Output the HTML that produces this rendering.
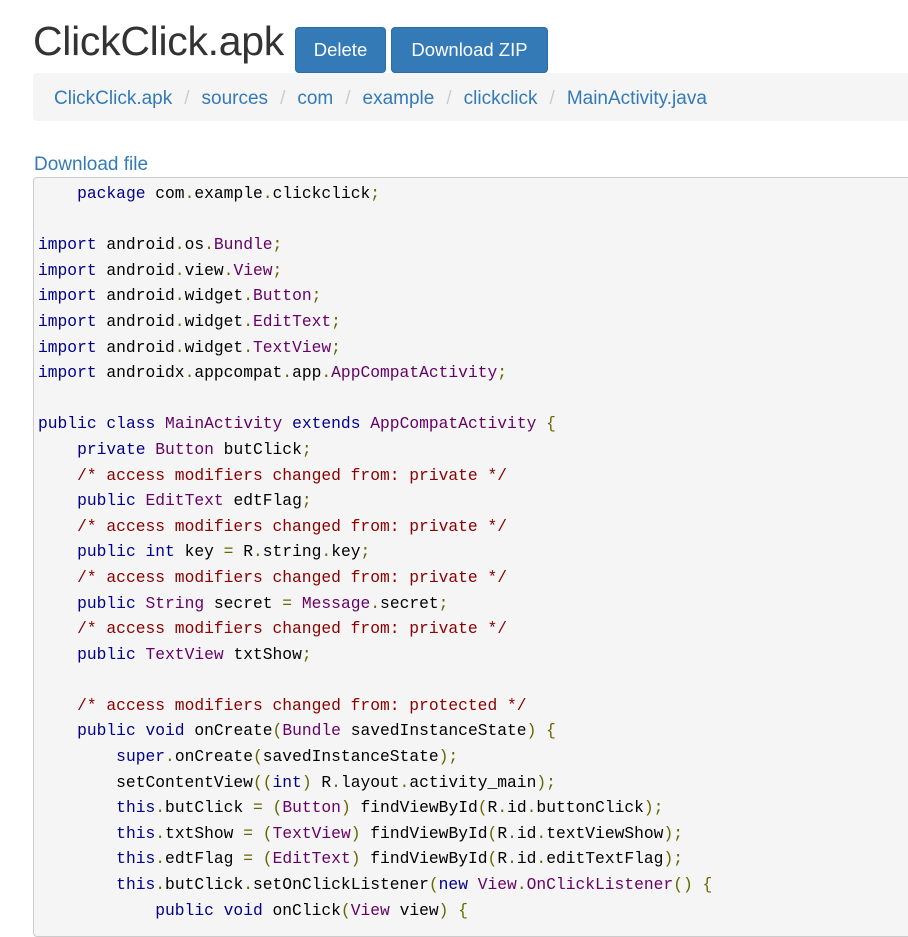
<!DOCTYPE html>
<html><head><meta charset="utf-8"><style>
body{margin:0;background:#fff;font-family:"Liberation Sans",Arial,sans-serif;width:908px;height:912px;overflow:hidden;position:relative}
h1{position:absolute;left:33px;top:16px;margin:0;font-size:41px;font-weight:normal;color:#333;line-height:50px;letter-spacing:-0.3px}
.btn{position:absolute;top:27px;height:46px;background:#337ab7;border:1px solid #2e6da4;border-radius:4px;color:#fff;font-size:18.5px;line-height:44px;text-align:center;box-sizing:border-box}
.bc{position:absolute;left:33px;top:73px;width:890px;height:48px;background:#f5f5f5;border-radius:4px;font-size:19px;line-height:52px;padding-left:21px;box-sizing:border-box;color:#337ab7;white-space:nowrap}
.bc s{text-decoration:none;color:#ccc;padding:0 12px}
.dl{position:absolute;left:34px;top:153px;font-size:19px;color:#337ab7;line-height:24px}
pre{position:absolute;left:33px;top:177px;width:900px;height:760px;margin:0;background:#f5f5f5;border:1px solid #ccc;border-radius:4px;padding:3px 4px;font-family:"Liberation Mono",monospace;font-size:16.3px;line-height:25.6px;color:#000;box-sizing:border-box}
.k{color:#008}.t{color:#606}.p{color:#660}.c{color:#800}
</style></head><body>
<h1>ClickClick.apk</h1>
<div class="btn" style="left:295px;width:91px">Delete</div>
<div class="btn" style="left:391px;width:157px">Download ZIP</div>
<div class="bc">ClickClick.apk<s>/</s>sources<s>/</s>com<s>/</s>example<s>/</s>clickclick<s>/</s>MainActivity.java</div>
<div class="dl">Download file</div>
<pre>    <span class="k">package</span> com<span class="p">.</span>example<span class="p">.</span>clickclick<span class="p">;</span>

<span class="k">import</span> android<span class="p">.</span>os<span class="p">.</span><span class="t">Bundle</span><span class="p">;</span>
<span class="k">import</span> android<span class="p">.</span>view<span class="p">.</span><span class="t">View</span><span class="p">;</span>
<span class="k">import</span> android<span class="p">.</span>widget<span class="p">.</span><span class="t">Button</span><span class="p">;</span>
<span class="k">import</span> android<span class="p">.</span>widget<span class="p">.</span><span class="t">EditText</span><span class="p">;</span>
<span class="k">import</span> android<span class="p">.</span>widget<span class="p">.</span><span class="t">TextView</span><span class="p">;</span>
<span class="k">import</span> androidx<span class="p">.</span>appcompat<span class="p">.</span>app<span class="p">.</span><span class="t">AppCompatActivity</span><span class="p">;</span>

<span class="k">public</span> <span class="k">class</span> <span class="t">MainActivity</span> <span class="k">extends</span> <span class="t">AppCompatActivity</span> <span class="p">{</span>
    <span class="k">private</span> <span class="t">Button</span> butClick<span class="p">;</span>
    <span class="c">/* access modifiers changed from: private */</span>
    <span class="k">public</span> <span class="t">EditText</span> edtFlag<span class="p">;</span>
    <span class="c">/* access modifiers changed from: private */</span>
    <span class="k">public</span> <span class="k">int</span> key <span class="p">=</span> R<span class="p">.</span>string<span class="p">.</span>key<span class="p">;</span>
    <span class="c">/* access modifiers changed from: private */</span>
    <span class="k">public</span> <span class="t">String</span> secret <span class="p">=</span> <span class="t">Message</span><span class="p">.</span>secret<span class="p">;</span>
    <span class="c">/* access modifiers changed from: private */</span>
    <span class="k">public</span> <span class="t">TextView</span> txtShow<span class="p">;</span>

    <span class="c">/* access modifiers changed from: protected */</span>
    <span class="k">public</span> <span class="k">void</span> onCreate<span class="p">(</span><span class="t">Bundle</span> savedInstanceState<span class="p">)</span> <span class="p">{</span>
        <span class="k">super</span><span class="p">.</span>onCreate<span class="p">(</span>savedInstanceState<span class="p">);</span>
        setContentView<span class="p">((</span><span class="k">int</span><span class="p">)</span> R<span class="p">.</span>layout<span class="p">.</span>activity_main<span class="p">);</span>
        <span class="k">this</span><span class="p">.</span>butClick <span class="p">=</span> <span class="p">(</span><span class="t">Button</span><span class="p">)</span> findViewById<span class="p">(</span>R<span class="p">.</span>id<span class="p">.</span>buttonClick<span class="p">);</span>
        <span class="k">this</span><span class="p">.</span>txtShow <span class="p">=</span> <span class="p">(</span><span class="t">TextView</span><span class="p">)</span> findViewById<span class="p">(</span>R<span class="p">.</span>id<span class="p">.</span>textViewShow<span class="p">);</span>
        <span class="k">this</span><span class="p">.</span>edtFlag <span class="p">=</span> <span class="p">(</span><span class="t">EditText</span><span class="p">)</span> findViewById<span class="p">(</span>R<span class="p">.</span>id<span class="p">.</span>editTextFlag<span class="p">);</span>
        <span class="k">this</span><span class="p">.</span>butClick<span class="p">.</span>setOnClickListener<span class="p">(</span><span class="k">new</span> <span class="t">View</span><span class="p">.</span><span class="t">OnClickListener</span><span class="p">()</span> <span class="p">{</span>
            <span class="k">public</span> <span class="k">void</span> onClick<span class="p">(</span><span class="t">View</span> view<span class="p">)</span> <span class="p">{</span>
</pre>
</body></html>
